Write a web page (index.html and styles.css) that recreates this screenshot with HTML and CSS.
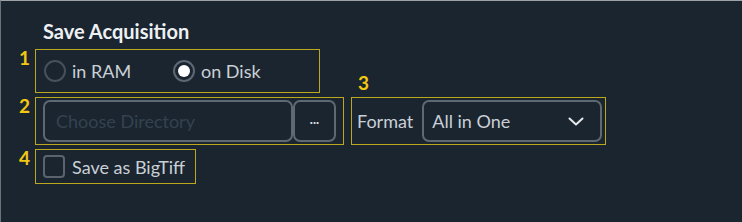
FILE: index.html
```html
<!DOCTYPE html>
<html lang="en">
<head>
    <meta charset="UTF-8">
    <title>Save Acquisition</title>
    <link rel="stylesheet" href="styles.css">
</head>
<body>
    <div class="panel">
        <div class="title">Save Acquisition</div>

        <div class="row">
            <span class="num">1</span>
            <div class="box box-mode">
                <label class="radio"><span class="dot"></span>in RAM</label>
                <label class="radio checked"><span class="dot"></span>on Disk</label>
            </div>
        </div>

        <div class="row">
            <span class="num">2</span>
            <div class="box box-dir">
                <div class="field">Choose Directory</div>
                <div class="browse">...</div>
            </div>
            <div class="box box-format">
                <span class="num num-top">3</span>
                <span class="label">Format</span>
                <div class="select">
                    <span>All in One</span>
                    <svg width="16" height="9" viewBox="0 0 16 9"><path d="M1.5 1.5 L8 7.5 L14.5 1.5" fill="none" stroke="#e6e9ec" stroke-width="2" stroke-linecap="round" stroke-linejoin="round"/></svg>
                </div>
            </div>
        </div>

        <div class="row">
            <span class="num">4</span>
            <div class="box box-tiff">
                <label class="check"><span class="square"></span>Save as BigTiff</label>
            </div>
        </div>
    </div>
</body>
</html>
```

FILE: styles.css
```css
body {
    margin: 0;
    width: 742px;
    height: 222px;
    box-sizing: border-box;
    background: #1b2530;
    border-top: 1px solid #9ea3a8;
    border-left: 1px solid #6c7278;
    font-family: Lato, "Open Sans", sans-serif;
    color: #c9d0d6;
    overflow: hidden;
}
.panel {
    padding: 17px 0 0 18px;
}
.title {
    font-size: 20px;
    font-weight: bold;
    color: #eef1f3;
    margin-left: 24px;
    height: 31px;
    line-height: 26px;
}
.row {
    display: flex;
    align-items: flex-start;
    margin-bottom: 4px;
}
.num {
    width: 16px;
    color: #f2c811;
    font-size: 19px;
    font-weight: bold;
    line-height: 18px;
}
.box {
    border: 1px solid #bba81e;
    display: flex;
    align-items: center;
    box-sizing: border-box;
}
.box-mode {
    width: 285px;
    height: 44px;
    padding-left: 8px;
}
.radio {
    display: flex;
    align-items: center;
    font-size: 18px;
    width: 129px;
}
.dot {
    width: 22px;
    height: 22px;
    box-sizing: border-box;
    border: 2px solid #46515c;
    border-radius: 50%;
    margin-right: 6px;
    position: relative;
}
.checked .dot {
    border-color: #5d6874;
}
.checked .dot::after {
    content: "";
    position: absolute;
    left: 3px;
    top: 3px;
    width: 12px;
    height: 12px;
    border-radius: 50%;
    background: #ffffff;
}
.box-dir {
    width: 309px;
    height: 48px;
    padding: 0 6px 0 7px;
}
.field {
    width: 250px;
    height: 42px;
    box-sizing: border-box;
    border: 2px solid #5f6973;
    border-radius: 7px;
    padding-left: 11px;
    line-height: 38px;
    font-size: 18px;
    color: #34424f;
}
.browse {
    width: 43px;
    height: 42px;
    box-sizing: border-box;
    border: 2px solid #5f6973;
    border-radius: 7px;
    text-align: center;
    line-height: 34px;
    font-size: 13px;
    font-weight: bold;
    color: #dfe3e7;
}
.box-format {
    position: relative;
    width: 255px;
    height: 48px;
    margin-left: 7px;
    padding-left: 5px;
}
.num-top {
    position: absolute;
    left: 6px;
    top: -24px;
}
.label {
    font-size: 18px;
    margin-right: 9px;
}
.select {
    width: 180px;
    height: 42px;
    box-sizing: border-box;
    border: 2px solid #5f6973;
    border-radius: 7px;
    display: flex;
    align-items: center;
    justify-content: space-between;
    padding: 0 16px 0 8px;
    font-size: 18px;
}
.box-tiff {
    width: 161px;
    height: 35px;
    padding-left: 7px;
}
.check {
    display: flex;
    align-items: center;
    font-size: 18px;
}
.square {
    width: 22px;
    height: 23px;
    box-sizing: border-box;
    border: 2px solid #5a646f;
    border-radius: 4px;
    margin-right: 7px;
}
```
